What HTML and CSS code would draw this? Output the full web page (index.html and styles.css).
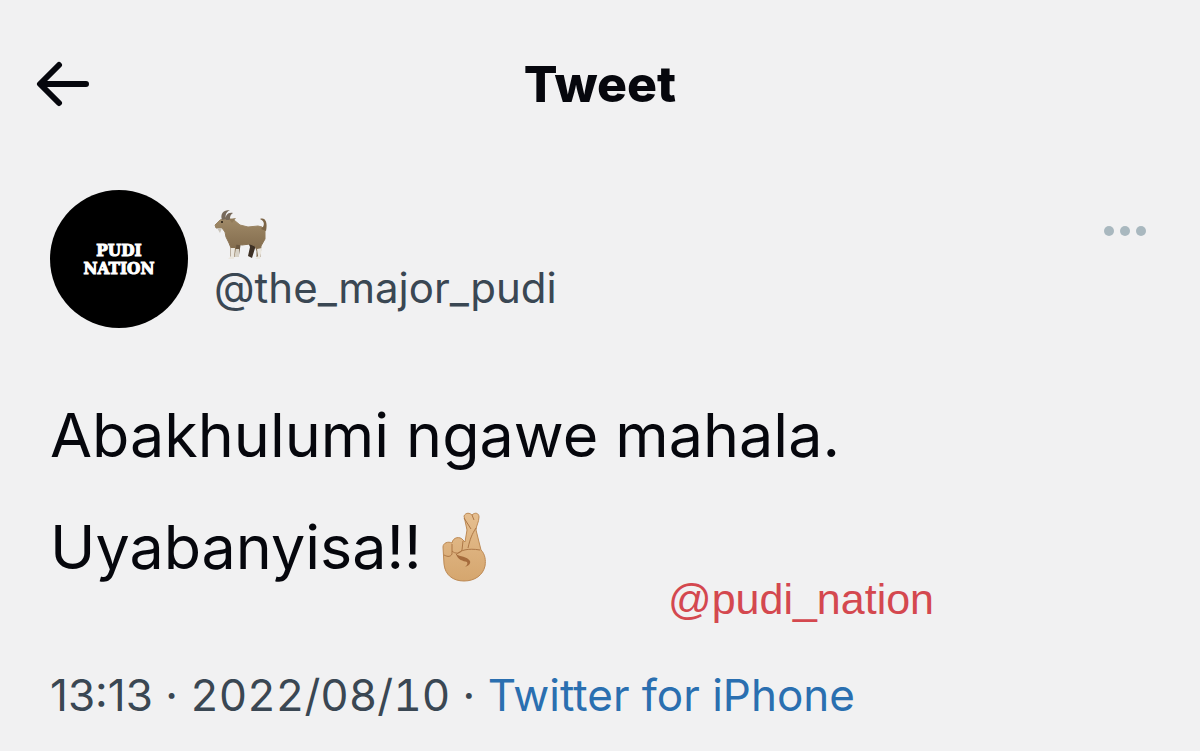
FILE: index.html
```
<!DOCTYPE html>
<html lang="en">
<head>
  <meta charset="utf-8">
  <title>Tweet</title>
  <link rel="stylesheet" href="styles.css">
</head>
<body>
  <header class="topbar">
    <button class="back" type="button" aria-label="Back">
      <svg width="54" height="46" viewBox="0 0 54 46">
        <path d="M50 23H5M23 4L4 23L23 42" fill="none" stroke="#06070d" stroke-width="6" stroke-linecap="round" stroke-linejoin="round"/>
      </svg>
    </button>
    <h1>Tweet</h1>
  </header>
  <main class="tweet">
    <div class="author">
      <div class="avatar"><span>PUDI</span><span>NATION</span></div>
      <div class="names">
        <svg class="goat" width="54" height="52" viewBox="0 0 54 52" role="img" aria-label="goat">
          <defs>
            <linearGradient id="fur" x1="0" y1="0" x2="0" y2="1">
              <stop offset="0" stop-color="#a08a68"/>
              <stop offset="1" stop-color="#7c6547"/>
            </linearGradient>
          </defs>
          <path d="M34 33L36 38L34 47L38 49L42 36Z" fill="#3d3024"/>
          <path d="M19 33L21 46L25 46L27 33Z" fill="#6b573f"/>
          <path d="M21 40L20 48H25L25 40Z" fill="#d8d2c6"/>
          <path d="M12 9L6 11L1 16L2 19L8 19L11 23L12 28L15 34L17 39L17 48L20 48L22 35L28 36L36 35L41 37L43 42L43 48L46 48L47 37L51 30L51 21L48 18L44 17L34 18L26 16L20 11Z" fill="url(#fur)" stroke="url(#fur)" stroke-width="1" stroke-linejoin="round"/>
          <path d="M47 20C51 17 51 12 46 10C51 8 54 13 52 22Z" fill="#7c6547"/>
          <path d="M17 39L17 47L14 50H20L21 39ZM43 40L44 47L41 50H46L48 39Z" fill="#ebe7df"/>
          <path d="M8 11C6 5 9 1 16 1C12 3 11 6 12 10ZM12 11C11 6 14 3 19 4C16 6 16 8 16 11Z" fill="#77695a"/>
          <path d="M15 10L22 9L18 14Z" fill="#907a59"/>
          <path d="M3 19L8 19L6 24Z" fill="#c9c3b8"/>
          <circle cx="8" cy="13" r="1" fill="#201811"/>
        </svg>
        <a class="handle" href="#">@the_major_pudi</a>
      </div>
      <button class="more" type="button" aria-label="More"><i></i><i></i><i></i></button>
    </div>
    <div class="body">
      <p>Abakhulumi ngawe mahala.</p>
      <p>Uyabanyisa!!
        <svg class="fingers" width="46" height="70" viewBox="0 0 46 70" role="img" aria-label="fingers crossed">
          <defs>
            <linearGradient id="skin" x1="0" y1="0" x2="0" y2="1">
              <stop offset="0" stop-color="#e6bf90"/>
              <stop offset="1" stop-color="#d5a66e"/>
            </linearGradient>
          </defs>
          <path d="M22 4C24 0 28 1 30 3C33 0 37 1 37 5C37 10 34 14 34 18L39 38C43 42 44 48 43 54C41 63 33 69 22 69C11 69 3 63 2 52L1 35C1 31 6 29 10 31C11 25 18 24 21 28L23 30L25 18Z" fill="url(#skin)" stroke="#bd8a55" stroke-width="1"/>
          <path d="M30 3L32 8M34 16C30 22 28 27 26 36M22 6L29 17M10 32L10 42C8 46 4 44 2 43M21 29L20 38C18 42 13 42 10 39" fill="none" stroke="#ad7746" stroke-width="1"/>
          <path d="M14 43C18 38 26 36 38 38" fill="none" stroke="#ad7746" stroke-width="1"/>
          <path d="M14 42C18 45 25 44 28 49C29 52 26 54 23 55C25 53 26 52 25 50C21 49 16 48 14 42Z" fill="#a56b3c"/>
        </svg>
      </p>
      <span class="watermark">@pudi_nation</span>
    </div>
    <footer class="meta">
      <time>13:13</time> · <time class="date">2022/08/10</time> · <a href="#">Twitter for iPhone</a>
    </footer>
  </main>
</body>
</html>
```

FILE: styles.css
```
* {
  box-sizing: border-box;
}
body {
  margin: 0;
  background-color: #f1f1f2;
  color: #06070d;
  font-family: Inter, "Liberation Sans", sans-serif;
}
h1, p {
  margin: 0;
}
a {
  text-decoration: none;
}
button {
  padding: 0;
  border: none;
  background: none;
  cursor: pointer;
}
svg {
  display: block;
}
.topbar {
  display: grid;
  grid-template-columns: 1fr auto 1fr;
  align-items: center;
  padding: 54px 36px 0;
}
.back {
  justify-self: start;
}
h1 {
  font-size: 50px;
  line-height: 60px;
  font-weight: 800;
}
.tweet {
  padding: 76px 50px 0;
}
.author {
  display: flex;
  align-items: flex-start;
}
.avatar {
  display: flex;
  flex-direction: column;
  align-items: center;
  justify-content: center;
  width: 138px;
  height: 138px;
  border-radius: 50%;
  background-color: #000;
  color: #fff;
  font-family: "DejaVu Serif Condensed", "DejaVu Serif", serif;
  font-size: 17px;
  line-height: 18px;
  font-weight: bold;
  -webkit-text-stroke: 1px #fff;
}
.names {
  flex: 1;
  padding: 19px 0 0 26px;
}
.handle {
  display: block;
  color: #3a4753;
  font-size: 42px;
  line-height: 54px;
}
.more {
  display: flex;
  gap: 6px;
  padding: 36px 4px;
}
.more i {
  width: 10px;
  height: 10px;
  border-radius: 50%;
  background-color: #a9b8bf;
}
.body {
  position: relative;
  margin-top: 51px;
  font-size: 61px;
  line-height: 112px;
}
.body p {
  display: flex;
  align-items: center;
  gap: 20px;
}
.watermark {
  position: absolute;
  left: 618px;
  bottom: -20px;
  color: #d4484f;
  font-family: "Liberation Sans", Arial, sans-serif;
  font-size: 43px;
  line-height: 48px;
}
.meta {
  margin-top: 62px;
  color: #3a4753;
  font-size: 44px;
  line-height: 60px;
}
.date {
  font-variant-numeric: tabular-nums;
}
.meta a {
  color: #2a6fb0;
}
```
